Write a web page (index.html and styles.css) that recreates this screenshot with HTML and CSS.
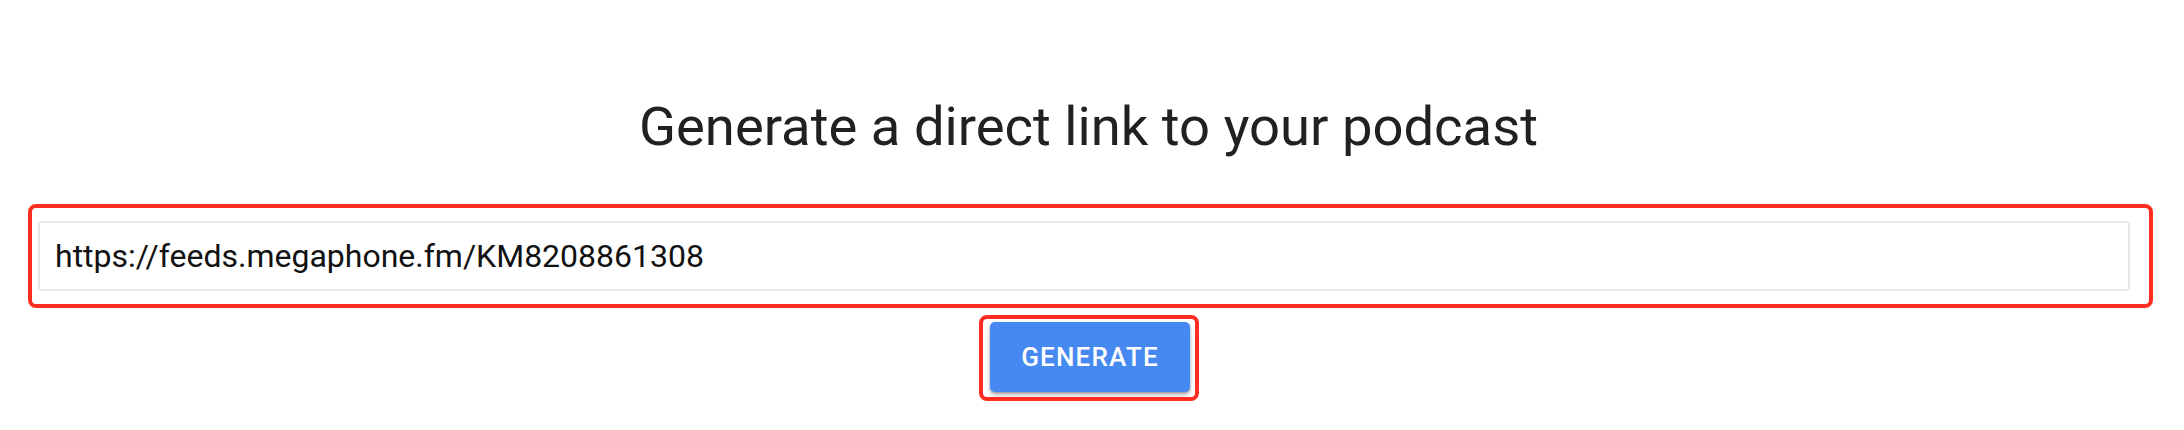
FILE: index.html
```html
<!DOCTYPE html>
<html lang="en">
<head>
<meta charset="utf-8">
<title>Generate a direct link to your podcast</title>
<link rel="stylesheet" href="styles.css">
</head>
<body>
<main class="page">
  <h1 class="title">Generate a direct link to your podcast</h1>
  <div class="field-wrap">
    <input class="url-input" type="text" value="https://feeds.megaphone.fm/KM8208861308">
  </div>
  <div class="btn-wrap">
    <button class="btn" type="button">Generate</button>
  </div>
</main>
</body>
</html>
```
FILE: styles.css
```css
html, body {
  margin: 0;
  padding: 0;
  background: #ffffff;
}
body {
  font-family: Roboto, "Liberation Sans", Arial, sans-serif;
}
.page {
  display: flex;
  flex-direction: column;
  align-items: center;
  padding-top: 94px;
}
.title {
  margin: 0 0 44px 0;
  font-size: 54.4px;
  line-height: 66px;
  font-weight: 400;
  color: #212121;
  padding-right: 7px;
}
.field-wrap {
  align-self: stretch;
  margin: 0 31px 0 28px;
  border: 4px solid #ff2d20;
  border-radius: 8px;
  padding: 13px 19px 13px 6px;
}
.url-input {
  display: block;
  box-sizing: border-box;
  width: 100%;
  height: 70px;
  border: 2px solid #e8e8e8;
  border-radius: 3px;
  padding: 0 15px;
  font-family: Roboto, "Liberation Sans", Arial, sans-serif;
  font-size: 32px;
  color: #111111;
  background: #ffffff;
  outline: none;
}
.btn-wrap {
  margin-top: 7px;
  margin-right: 6px;
  border: 4px solid #ff2d20;
  border-radius: 8px;
  padding: 3px 5px 5px 7px;
}
.btn {
  display: block;
  width: 200px;
  height: 70px;
  border: none;
  border-radius: 5px;
  background: #4689f0;
  color: #ffffff;
  font-family: Roboto, "Liberation Sans", Arial, sans-serif;
  font-size: 26px;
  font-weight: 500;
  letter-spacing: 1.2px;
  text-transform: uppercase;
  box-shadow: 0 3px 4px rgba(0,0,0,0.28), 0 1px 2px rgba(0,0,0,0.2);
  cursor: pointer;
}
```
